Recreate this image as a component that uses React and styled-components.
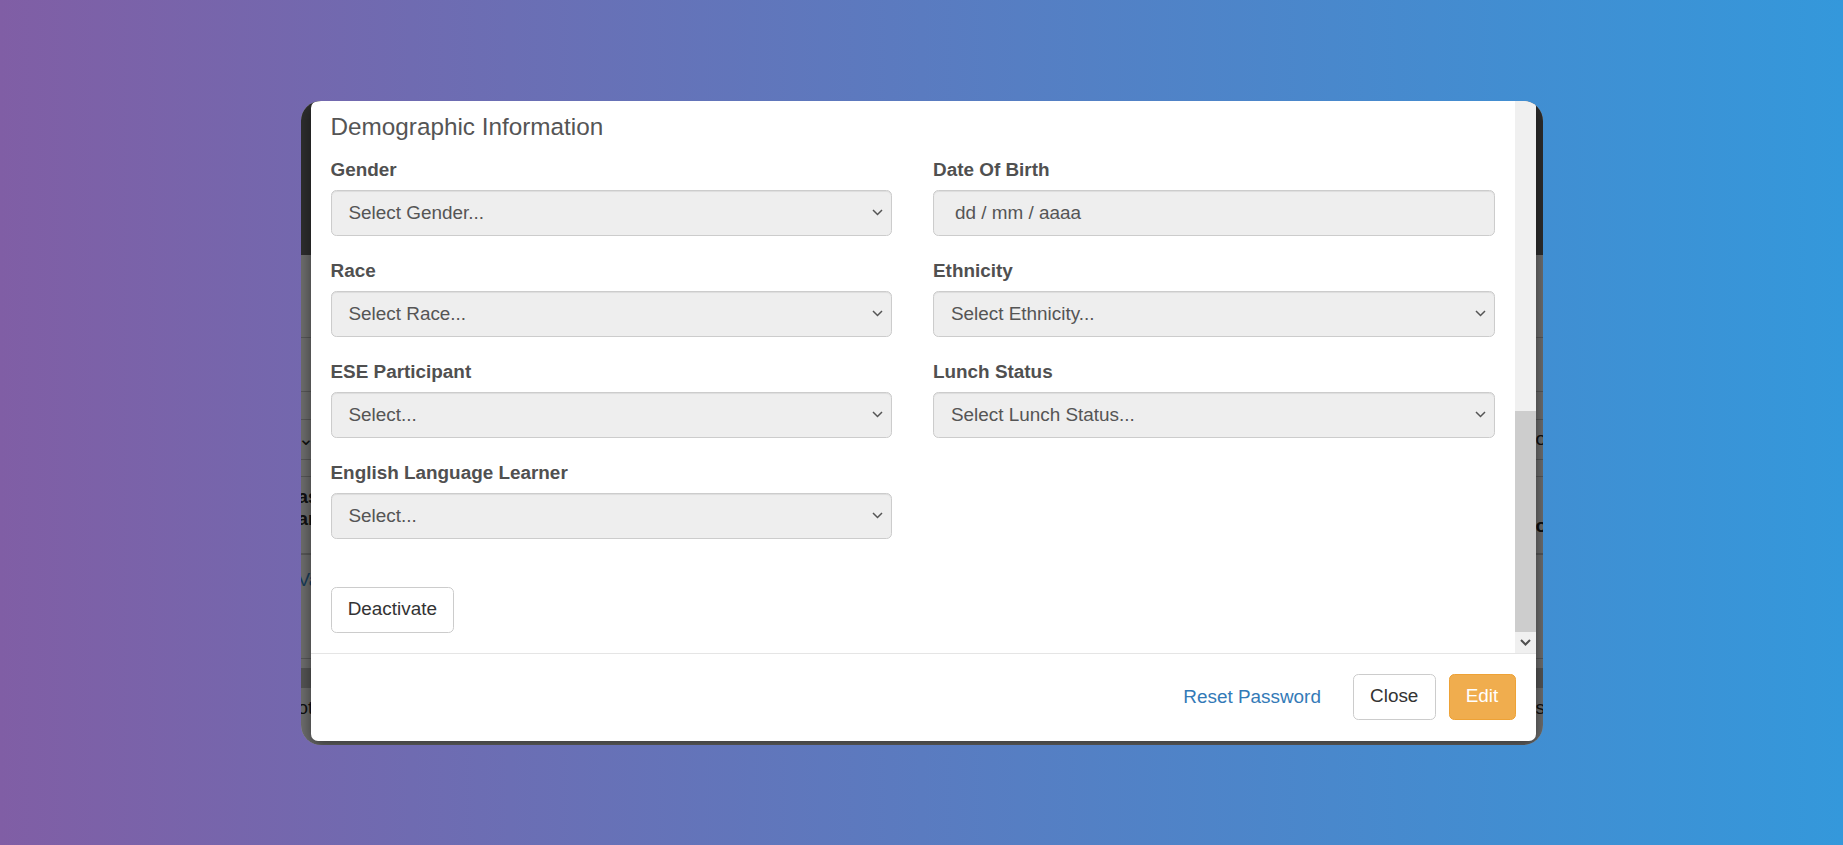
import React from 'react';
import styled, { createGlobalStyle } from 'styled-components';

const GlobalStyle = createGlobalStyle`
  html, body {
    margin: 0;
    padding: 0;
  }
  body {
    font-family: "Liberation Sans", Arial, sans-serif;
    font-size: 18.9px;
    color: #333;
  }
  * {
    box-sizing: border-box;
  }
`;

const Stage = styled.div`
  width: 100%;
  height: 845px;
  display: flex;
  align-items: center;
  justify-content: center;
  background: linear-gradient(90deg, #805ea5 0%, #3498db 100%);
`;

const Window = styled.div`
  position: relative;
  width: 1242px;
  height: 644px;
  border-radius: 20px;
  overflow: hidden;
  background: #dcdcdc;
`;

// the page behind the modal, only its edges show
const Page = styled.div`
  display: flex;
  flex-direction: column;
  height: 100%;
`;

const PageHeader = styled.div`
  height: 154px;
  flex-shrink: 0;
  background: #5c5c5c;
`;

const PageRow = styled.div`
  display: flex;
  justify-content: space-between;
  align-items: center;
  height: ${({ h }) => h}px;
  flex-shrink: 0;
  border-bottom: ${({ line }) => line || 0}px solid #b0b0b0;
  background: ${({ band }) => (band ? '#ababab' : 'transparent')};
  font-size: 18.9px;
  line-height: 22px;
  overflow: hidden;
`;

const EdgeText = styled.div`
  white-space: nowrap;
  align-self: ${({ at }) => at || 'center'};
  padding-top: ${({ top }) => top || 0}px;
  padding-bottom: ${({ bottom }) => bottom || 0}px;
  font-weight: ${({ bold }) => (bold ? 'bold' : 'normal')};
  color: ${({ link }) => (link ? '#337ab7' : '#222')};
  margin-left: ${({ right }) => (right ? '0' : '-3px')};
  margin-right: ${({ right }) => (right ? '-22px' : '0')};
  width: ${({ right }) => (right ? '29px' : 'auto')};
`;

const Backdrop = styled.div`
  position: absolute;
  inset: 0;
  background: rgba(0, 0, 0, 0.5);
`;

const Modal = styled.div`
  position: absolute;
  top: 0;
  left: 10px;
  width: 1225px;
  height: 640px;
  display: flex;
  flex-direction: column;
  background: #fff;
  border-radius: 7px;
  box-shadow: 0 5px 15px rgba(0, 0, 0, 0.5);
`;

const ModalBody = styled.div`
  display: flex;
  height: 552px;
`;

const BodyContent = styled.div`
  flex: 1;
  padding: 13.5px 20px 20px 20px;
`;

const SectionTitle = styled.h4`
  margin: 0 0 14.8px 0;
  font-size: 24.3px;
  font-weight: normal;
  line-height: 1.1;
  color: #555;
`;

const FormGrid = styled.div`
  display: grid;
  grid-template-columns: 1fr 1fr;
  column-gap: 41px;
`;

const FormGroup = styled.div`
  margin-bottom: 21px;
`;

const Label = styled.label`
  display: block;
  margin-bottom: 7px;
  font-weight: bold;
  line-height: 27px;
  color: #505050;
`;

const Field = styled.div`
  display: flex;
  align-items: center;
  justify-content: space-between;
  height: 46px;
  padding: 0 8px 0 ${({ date }) => (date ? '21px' : '17px')};
  border: 1px solid #ccc;
  border-radius: 5.4px;
  background: #eee;
  box-shadow: inset 0 1px 1px rgba(0, 0, 0, 0.075);
  color: #555;
`;

const Chevron = styled.svg`
  width: 11px;
  height: 7px;
  flex-shrink: 0;
`;

const Button = styled.button`
  height: 46px;
  padding: 0 16.2px;
  font-family: inherit;
  font-size: 18.9px;
  line-height: 1;
  border-radius: 5.4px;
  border: 1px solid ${({ variant }) => (variant === 'warning' ? '#eea236' : '#ccc')};
  background: ${({ variant }) => (variant === 'warning' ? '#f0ad4e' : '#fff')};
  color: ${({ variant }) => (variant === 'warning' ? '#fff' : '#333')};
  margin-right: ${({ gapRight }) => gapRight || 0}px;
`;

const DeactivateButton = styled(Button)`
  margin-top: 27px;
`;

const LinkButton = styled.a`
  color: #337ab7;
  font-size: 18.9px;
  margin-right: 32px;
  text-decoration: none;
`;

const Scrollbar = styled.div`
  width: 21px;
  display: flex;
  flex-direction: column;
  justify-content: flex-end;
  background: #f0f0f0;
`;

const Thumb = styled.div`
  height: 221px;
  background: #cdcdcd;
`;

const ArrowButton = styled.div`
  height: 21px;
  display: flex;
  align-items: center;
  justify-content: center;
`;

const ModalFooter = styled.div`
  display: flex;
  justify-content: flex-end;
  align-items: center;
  padding: 20px;
  border-top: 1px solid #e5e5e5;
`;

const SelectArrow = () => (
  <Chevron viewBox="0 0 11 7">
    <polyline points="1,1 5.5,5.5 10,1" fill="none" stroke="#555" strokeWidth="1.5" />
  </Chevron>
);

const fields = [
  { label: 'Gender', value: 'Select Gender...' },
  { label: 'Date Of Birth', value: 'dd / mm / aaaa', date: true },
  { label: 'Race', value: 'Select Race...' },
  { label: 'Ethnicity', value: 'Select Ethnicity...' },
  { label: 'ESE Participant', value: 'Select...' },
  { label: 'Lunch Status', value: 'Select Lunch Status...' },
  { label: 'English Language Learner', value: 'Select...' },
];

const BehindPage = () => (
  <Page>
    <PageHeader />
    <PageRow h={83} line={1} />
    <PageRow h={54} line={1} />
    <PageRow h={28} line={1} />
    <PageRow h={40} line={1}>
      <EdgeText>⌄</EdgeText>
      <EdgeText right>oc</EdgeText>
    </PageRow>
    <PageRow h={17} line={1} />
    <PageRow h={78} line={2}>
      <EdgeText bold at="flex-start" top={9}>as<br />ar</EdgeText>
      <EdgeText right bold at="flex-end" bottom={16}>o'</EdgeText>
    </PageRow>
    <PageRow h={104} line={1}>
      <EdgeText link at="flex-start" top={14}>Va</EdgeText>
    </PageRow>
    <PageRow h={9} />
    <PageRow h={20} band />
    <PageRow h={40}>
      <EdgeText>ot</EdgeText>
      <EdgeText right>s</EdgeText>
    </PageRow>
  </Page>
);

export default function App() {
  return (
    <>
      <GlobalStyle />
      <Stage>
        <Window>
          <BehindPage />
          <Backdrop />
          <Modal>
            <ModalBody>
              <BodyContent>
                <SectionTitle>Demographic Information</SectionTitle>
                <FormGrid>
                  {fields.map((f) => (
                    <FormGroup key={f.label}>
                      <Label>{f.label}</Label>
                      <Field date={f.date}>
                        <span>{f.value}</span>
                        {!f.date && <SelectArrow />}
                      </Field>
                    </FormGroup>
                  ))}
                </FormGrid>
                <DeactivateButton>Deactivate</DeactivateButton>
              </BodyContent>
              <Scrollbar>
                <Thumb />
                <ArrowButton>
                  <svg width="11" height="7" viewBox="0 0 11 7">
                    <polyline points="1,1 5.5,5.5 10,1" fill="none" stroke="#505050" strokeWidth="2" />
                  </svg>
                </ArrowButton>
              </Scrollbar>
            </ModalBody>
            <ModalFooter>
              <LinkButton href="#">Reset Password</LinkButton>
              <Button gapRight={13}>Close</Button>
              <Button variant="warning">Edit</Button>
            </ModalFooter>
          </Modal>
        </Window>
      </Stage>
    </>
  );
}
